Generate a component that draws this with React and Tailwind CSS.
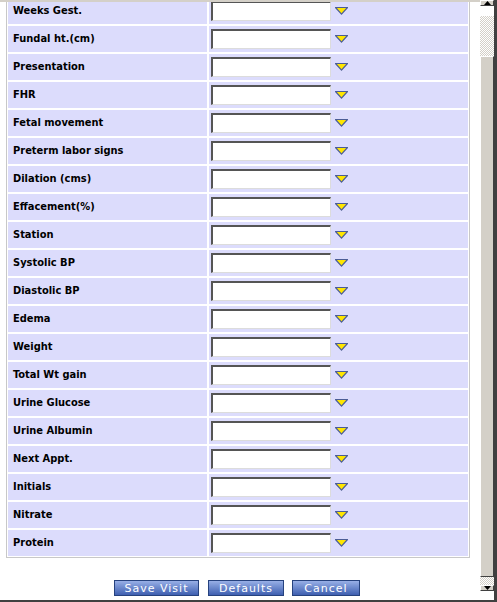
const fields = [
  'Weeks Gest.',
  'Fundal ht.(cm)',
  'Presentation',
  'FHR',
  'Fetal movement',
  'Preterm labor signs',
  'Dilation (cms)',
  'Effacement(%)',
  'Station',
  'Systolic BP',
  'Diastolic BP',
  'Edema',
  'Weight',
  'Total Wt gain',
  'Urine Glucose',
  'Urine Albumin',
  'Next Appt.',
  'Initials',
  'Nitrate',
  'Protein',
];

function DropArrow() {
  return (
    <svg width="13" height="8" viewBox="0 0 13 8" className="ml-[4px] shrink-0">
      <polygon points="0.5,0.5 12.5,0.5 6.5,7.2" fill="#ffe600" stroke="#4b5d96" strokeWidth="1.2" strokeLinejoin="round" />
    </svg>
  );
}

function ScrollButton({ up }) {
  return (
    <div className="flex items-center justify-center bg-[#d4d0c8] border border-t-white border-l-white border-r-[#404040] border-b-[#404040]">
      <svg width="7" height="4" viewBox="0 0 7 4">
        <polygon points={up ? '3.5,0 7,4 0,4' : '0,0 7,0 3.5,4'} fill="#000" />
      </svg>
    </div>
  );
}

function FormRow({ label }) {
  return (
    <div className="flex h-[26px] gap-[2px]">
      <div className="w-[199px] bg-[#dcdcfc] flex items-center pl-[5px] text-[11px] font-bold text-black font-['DejaVu_Sans_Condensed',sans-serif]">
        {label}
      </div>
      <div className="flex-1 bg-[#dcdcfc] flex items-center pl-[2px]">
        <input
          type="text"
          className="w-[120px] h-[20px] bg-white border-t-2 border-l-2 border-b border-r border-t-[#555] border-l-[#555] border-b-[#dcdcdc] border-r-[#dcdcdc] outline-none"
        />
        <DropArrow />
      </div>
    </div>
  );
}

export default function App() {
  return (
    <div className="w-[497px] h-[602px] flex flex-col bg-white overflow-hidden">
      <div className="flex h-[600px]">
        <div className="w-[480px] h-[600px] border-t-2 border-[#d4d0c8] overflow-hidden flex flex-col">
          <div className="-mt-[6px] ml-[6px] w-[464px] border border-[#c8c8c8] p-[1px] flex flex-col gap-[2px] shrink-0">
            {fields.map((f) => (
              <FormRow key={f} label={f} />
            ))}
          </div>
          <div className="mt-[22px] pl-[114px] flex font-['DejaVu_Sans',sans-serif] text-[11px] tracking-[1px] text-white">
            <button className="w-[85px] h-[16px] border border-[#26427e] bg-gradient-to-b from-[#98afe6] to-[#3f5fb0] leading-none">
              Save Visit
            </button>
            <button className="ml-[9px] w-[76px] h-[16px] border border-[#26427e] bg-gradient-to-b from-[#98afe6] to-[#3f5fb0] leading-none">
              Defaults
            </button>
            <button className="ml-[8px] w-[68px] h-[16px] border border-[#26427e] bg-gradient-to-b from-[#98afe6] to-[#3f5fb0] leading-none">
              Cancel
            </button>
          </div>
        </div>
        <div className="w-[14px] h-[600px] flex flex-col">
          <div className="h-[16px] flex flex-col">
            <ScrollButton up />
          </div>
          <div className="h-[40px] bg-[repeating-conic-gradient(#d4d0c8_0_25%,#ffffff_0_50%)] bg-[length:2px_2px]" />
          <div className="flex-1 bg-[#d4d0c8] border border-t-white border-l-white border-r-[#404040] border-b-[#404040]" />
          <div className="h-[8px] bg-[repeating-conic-gradient(#d4d0c8_0_25%,#ffffff_0_50%)] bg-[length:2px_2px]" />
          <div className="h-[15px] flex flex-col">
            <ScrollButton />
          </div>
        </div>
        <div className="w-[3px] bg-[#404040]" />
      </div>
      <div className="h-[2px] bg-[#404040]" />
    </div>
  );
}
